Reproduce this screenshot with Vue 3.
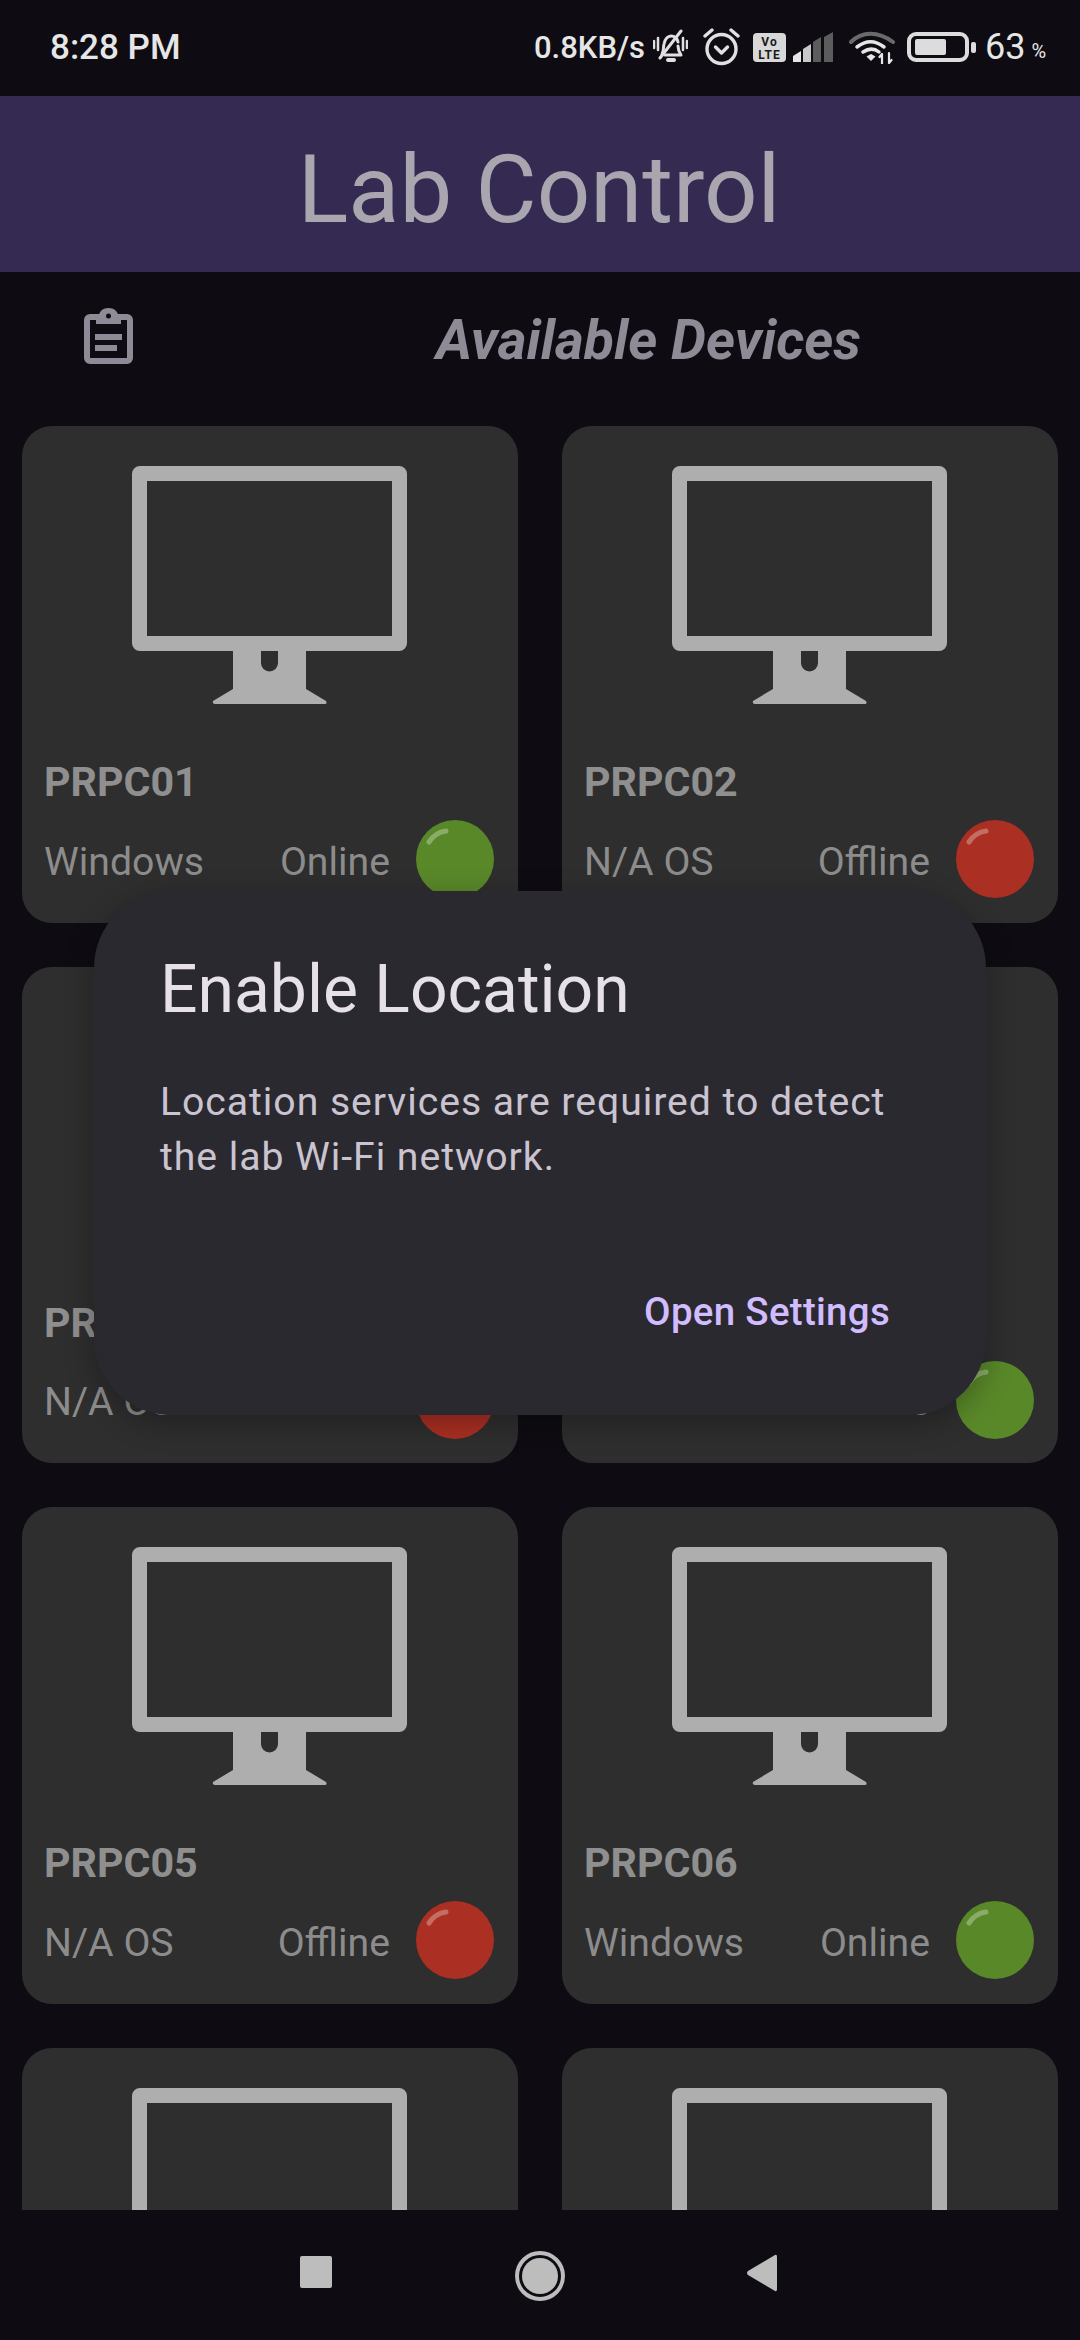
<script setup>
const devices = [
  { name: 'PRPC01', os: 'Windows', online: true },
  { name: 'PRPC02', os: 'N/A OS', online: false },
  { name: 'PRPC03', os: 'N/A OS', online: false },
  { name: 'PRPC04', os: 'Linux', online: true },
  { name: 'PRPC05', os: 'N/A OS', online: false },
  { name: 'PRPC06', os: 'Windows', online: true },
  { name: 'PRPC07', os: 'N/A OS', online: false },
  { name: 'PRPC08', os: 'N/A OS', online: false },
]
</script>

<template>
  <div class="screen">
    <div class="status">
      <span class="time">8:28 PM</span>
      <span class="speed">0.8KB/s</span>
      <svg class="bell" width="35" height="36" viewBox="0 0 35 36" fill="none" stroke="#e0e0e0" stroke-width="3" stroke-linecap="round" stroke-linejoin="round">
        <path d="M9 25c2-3 1-6 2-10 1-5 4-8 7-8 3 0 6 2 7 6M25 17c0 3 1 6 3 9H12" />
        <path d="M15 31h6" stroke-width="4" />
        <path d="M7 29 28 2" />
        <path d="M1 12v7M5 9v12M30 9v12M34 12v7" stroke-width="2.5" />
      </svg>
      <svg class="alarm" width="37" height="38" viewBox="0 0 37 38" fill="none" stroke="#e0e0e0" stroke-width="3.4" stroke-linecap="round" stroke-linejoin="round">
        <circle cx="18.5" cy="21" r="14.5" />
        <path d="M12.5 19l6 6 6-6" />
        <path d="M2 8l7-6M35 8l-7-6" />
      </svg>
      <svg class="volte" width="33" height="29" viewBox="0 0 33 29">
        <rect width="33" height="29" rx="4" fill="#d8d8d8" />
        <text x="16.500" y="13" text-anchor="middle" class="lte">Vo</text>
        <text x="16.500" y="25.500" text-anchor="middle" class="lte">LTE</text>
      </svg>
      <svg class="signal" width="40" height="30" viewBox="0 0 40 30">
        <path d="M0 24l8-5v11H0z" fill="#e6e6e6" />
        <path d="M10 17l8-5v18h-8z" fill="#c8c8c8" />
        <path d="M20 10l8-5v25h-8z" fill="#5c5c5c" />
        <path d="M31 5l9-5v30h-9z" fill="#5c5c5c" />
      </svg>
      <svg class="wifi" width="46" height="33" viewBox="0 0 46 33" fill="none" stroke-linecap="round">
        <path d="M2 11C13 0 29 0 44 11" stroke="#6a6a6a" stroke-width="4" />
        <path d="M8 16c9-7 18-7 27 0" stroke="#e6e6e6" stroke-width="3.500" />
        <path d="M14 21c6-4 11-4 16 0" stroke="#e6e6e6" stroke-width="3.500" />
        <path d="M17.500 25.500 22 23l4.500 2.500L22 30z" fill="#e6e6e6" />
        <path d="M33 33V23M30.500 26l2.500-3M40 22v10M42.500 29 40 32" stroke="#e6e6e6" stroke-width="2.200" />
      </svg>
      <svg class="battery" width="69" height="30" viewBox="0 0 69 30">
        <rect x="2" y="2" width="58" height="26" rx="7" fill="none" stroke="#dcdcdc" stroke-width="4" />
        <rect x="8" y="7" width="31" height="16" rx="2" fill="#dcdcdc" />
        <rect x="64" y="10" width="5" height="11" rx="2" fill="#dcdcdc" />
      </svg>
      <span class="level">63</span>
      <span class="percent">%</span>
    </div>

    <header class="bar">Lab Control</header>

    <div class="subhead">
      <svg class="clip" width="49" height="56" viewBox="0 0 49 56" fill="none" stroke="#8f8b96">
        <path d="M15 9H6a3 3 0 0 0-3 3v38a3 3 0 0 0 3 3h37a3 3 0 0 0 3-3V12a3 3 0 0 0-3-3h-9" stroke-width="6" />
        <path d="M16 11c0-5 3-9 8.500-9S33 6 33 11" stroke-width="4" fill="#8f8b96" />
        <path d="M12 13h25" stroke-width="6" />
        <circle cx="24.500" cy="8" r="2.500" fill="#0e0c12" stroke="none" />
        <path d="M11 29h27M11 40h22" stroke-width="6" />
      </svg>
      <h2 class="subtitle">Available Devices</h2>
    </div>

    <div class="list">
      <div class="grid">
        <div v-for="d in devices" :key="d.name" class="card">
          <svg class="monitor" width="275" height="238" viewBox="0 0 275 238">
            <path fill-rule="evenodd" fill="#aeaeae" d="M8 0h259a8 8 0 0 1 8 8v169a8 8 0 0 1-8 8h-93v38l20 12q1.500 3-1 3H83q-3 0-2-3l20-12v-38H8a8 8 0 0 1-8-8V8a8 8 0 0 1 8-8zM15 15v155h245V15zM129 185v12a8.500 8.500 0 0 0 17 0v-12z" />
          </svg>
          <div class="name">{{ d.name }}</div>
          <div class="info">
            <span class="os">{{ d.os }}</span>
            <span class="state">{{ d.online ? 'Online' : 'Offline' }}</span>
            <svg class="dot" width="78" height="78" viewBox="0 0 78 78">
              <circle cx="39" cy="39" r="39" :fill="d.online ? '#598829' : '#ab2f22'" />
              <path d="M13 22c4-6 9-10 17-11" fill="none" stroke="#fff" stroke-opacity=".3" stroke-width="5" stroke-linecap="round" />
            </svg>
          </div>
        </div>
      </div>
    </div>

    <nav class="nav">
      <span class="square"></span>
      <svg class="home" width="50" height="50" viewBox="0 0 50 50">
        <circle cx="25" cy="25" r="23" fill="none" stroke="#bdbdbd" stroke-width="4" />
        <circle cx="25" cy="25" r="18" fill="#bdbdbd" />
      </svg>
      <svg class="back" width="31" height="38" viewBox="0 0 31 38">
        <path d="M29 1q2-1 2 2v32q0 3-2 2L2 21q-2-2 0-4z" fill="#bdbdbd" />
      </svg>
    </nav>

    <div class="dialog">
      <h1 class="d-title">Enable Location</h1>
      <p class="d-body">Location services are required to detect the lab Wi-Fi network.</p>
      <div class="d-actions"><span class="d-btn">Open Settings</span></div>
    </div>
  </div>
</template>

<style>
html, body {
  margin: 0;
  background: #0e0c12;
}
</style>

<style scoped>
* {
  box-sizing: border-box;
  font-family: Roboto, sans-serif;
}

.screen {
  position: relative;
  width: 1080px;
  height: 2340px;
  display: flex;
  flex-direction: column;
  overflow: hidden;
  background: #0e0c12;
}

.status {
  height: 96px;
  flex: none;
  display: flex;
  align-items: center;
  padding: 0 0 2px 50px;
  color: #e6e6e6;
}

.time {
  font-size: 35px;
  font-weight: 500;
  width: 484px;
}

.speed {
  font-size: 31px;
  font-weight: 500;
  width: 119px;
}

.alarm { margin-left: 15px; }
.volte { margin-left: 13px; }
.signal { margin-left: 7px; }
.wifi { margin-left: 16px; }
.battery { margin-left: 12px; }

.lte {
  font-size: 12px;
  font-weight: 700;
  letter-spacing: 1px;
  fill: #1a1a1a;
}

.level {
  font-size: 36px;
  margin-left: 9px;
}

.percent {
  font-size: 20px;
  margin-left: 6px;
  margin-top: 8px;
}

.bar {
  height: 176px;
  flex: none;
  background: #342a52;
  color: #aaa6b0;
  font-size: 94px;
  text-align: center;
  line-height: 164px;
  padding: 12px 2px 0 0;
}

.subhead {
  height: 154px;
  flex: none;
  display: flex;
  align-items: center;
  padding-left: 84px;
}

.clip {
  margin-top: -26px;
}

.subtitle {
  margin: -18px 0 0 303px;
  font-size: 55.500px;
  font-style: italic;
  font-weight: 700;
  color: #8f8b96;
}

.list {
  flex: 1;
  overflow: hidden;
}

.grid {
  display: grid;
  grid-template-columns: 496px 496px;
  column-gap: 44px;
  row-gap: 44px;
  padding: 0 22px;
}

.card {
  height: 496.500px;
  border-radius: 30px;
  background: #2e2e2e;
  display: flex;
  flex-direction: column;
  padding: 40px 24px 0 22px;
}

.monitor {
  align-self: center;
  flex: none;
  margin-left: 1px;
}

.name {
  margin-top: 54px;
  font-size: 41.200px;
  line-height: 48px;
  font-weight: 700;
  color: #8f8f8f;
}

.info {
  margin-top: 14px;
  display: flex;
  align-items: center;
  font-size: 39.200px;
  color: #8c8c8c;
}

.os,
.state {
  margin-top: 5px;
}

.state {
  margin-left: auto;
}

.dot {
  margin-left: 26px;
  flex: none;
}

.nav {
  height: 130px;
  flex: none;
  display: flex;
  align-items: flex-start;
  padding: 41px 0 0 300px;
  background: #0e0c12;
}

.square {
  width: 32px;
  height: 32px;
  margin-top: 5px;
  border-radius: 2px;
  background: #bdbdbd;
}

.home { margin-left: 183px; }
.back { margin: 3px 0 0 181px; }

.dialog {
  position: absolute;
  left: 94px;
  top: 891px;
  width: 892px;
  height: 524px;
  border-radius: 77px;
  background: #2b2930;
  padding: 58px 66px 0;
  box-shadow: 0 8px 30px rgba(0, 0, 0, 0.3);
}

.d-title {
  margin: 0;
  font-size: 66px;
  line-height: 82px;
  font-weight: 400;
  color: #e6e0e9;
}

.d-body {
  margin: 44px 0 0;
  font-size: 39.200px;
  line-height: 55px;
  letter-spacing: 0.950px;
  color: #cac4d0;
}

.d-actions {
  display: flex;
  justify-content: flex-end;
  margin-top: 104px;
}

.d-btn {
  font-size: 38.500px;
  font-weight: 500;
  letter-spacing: 0.280px;
  color: #d0bcff;
  margin-right: 30px;
}
</style>
